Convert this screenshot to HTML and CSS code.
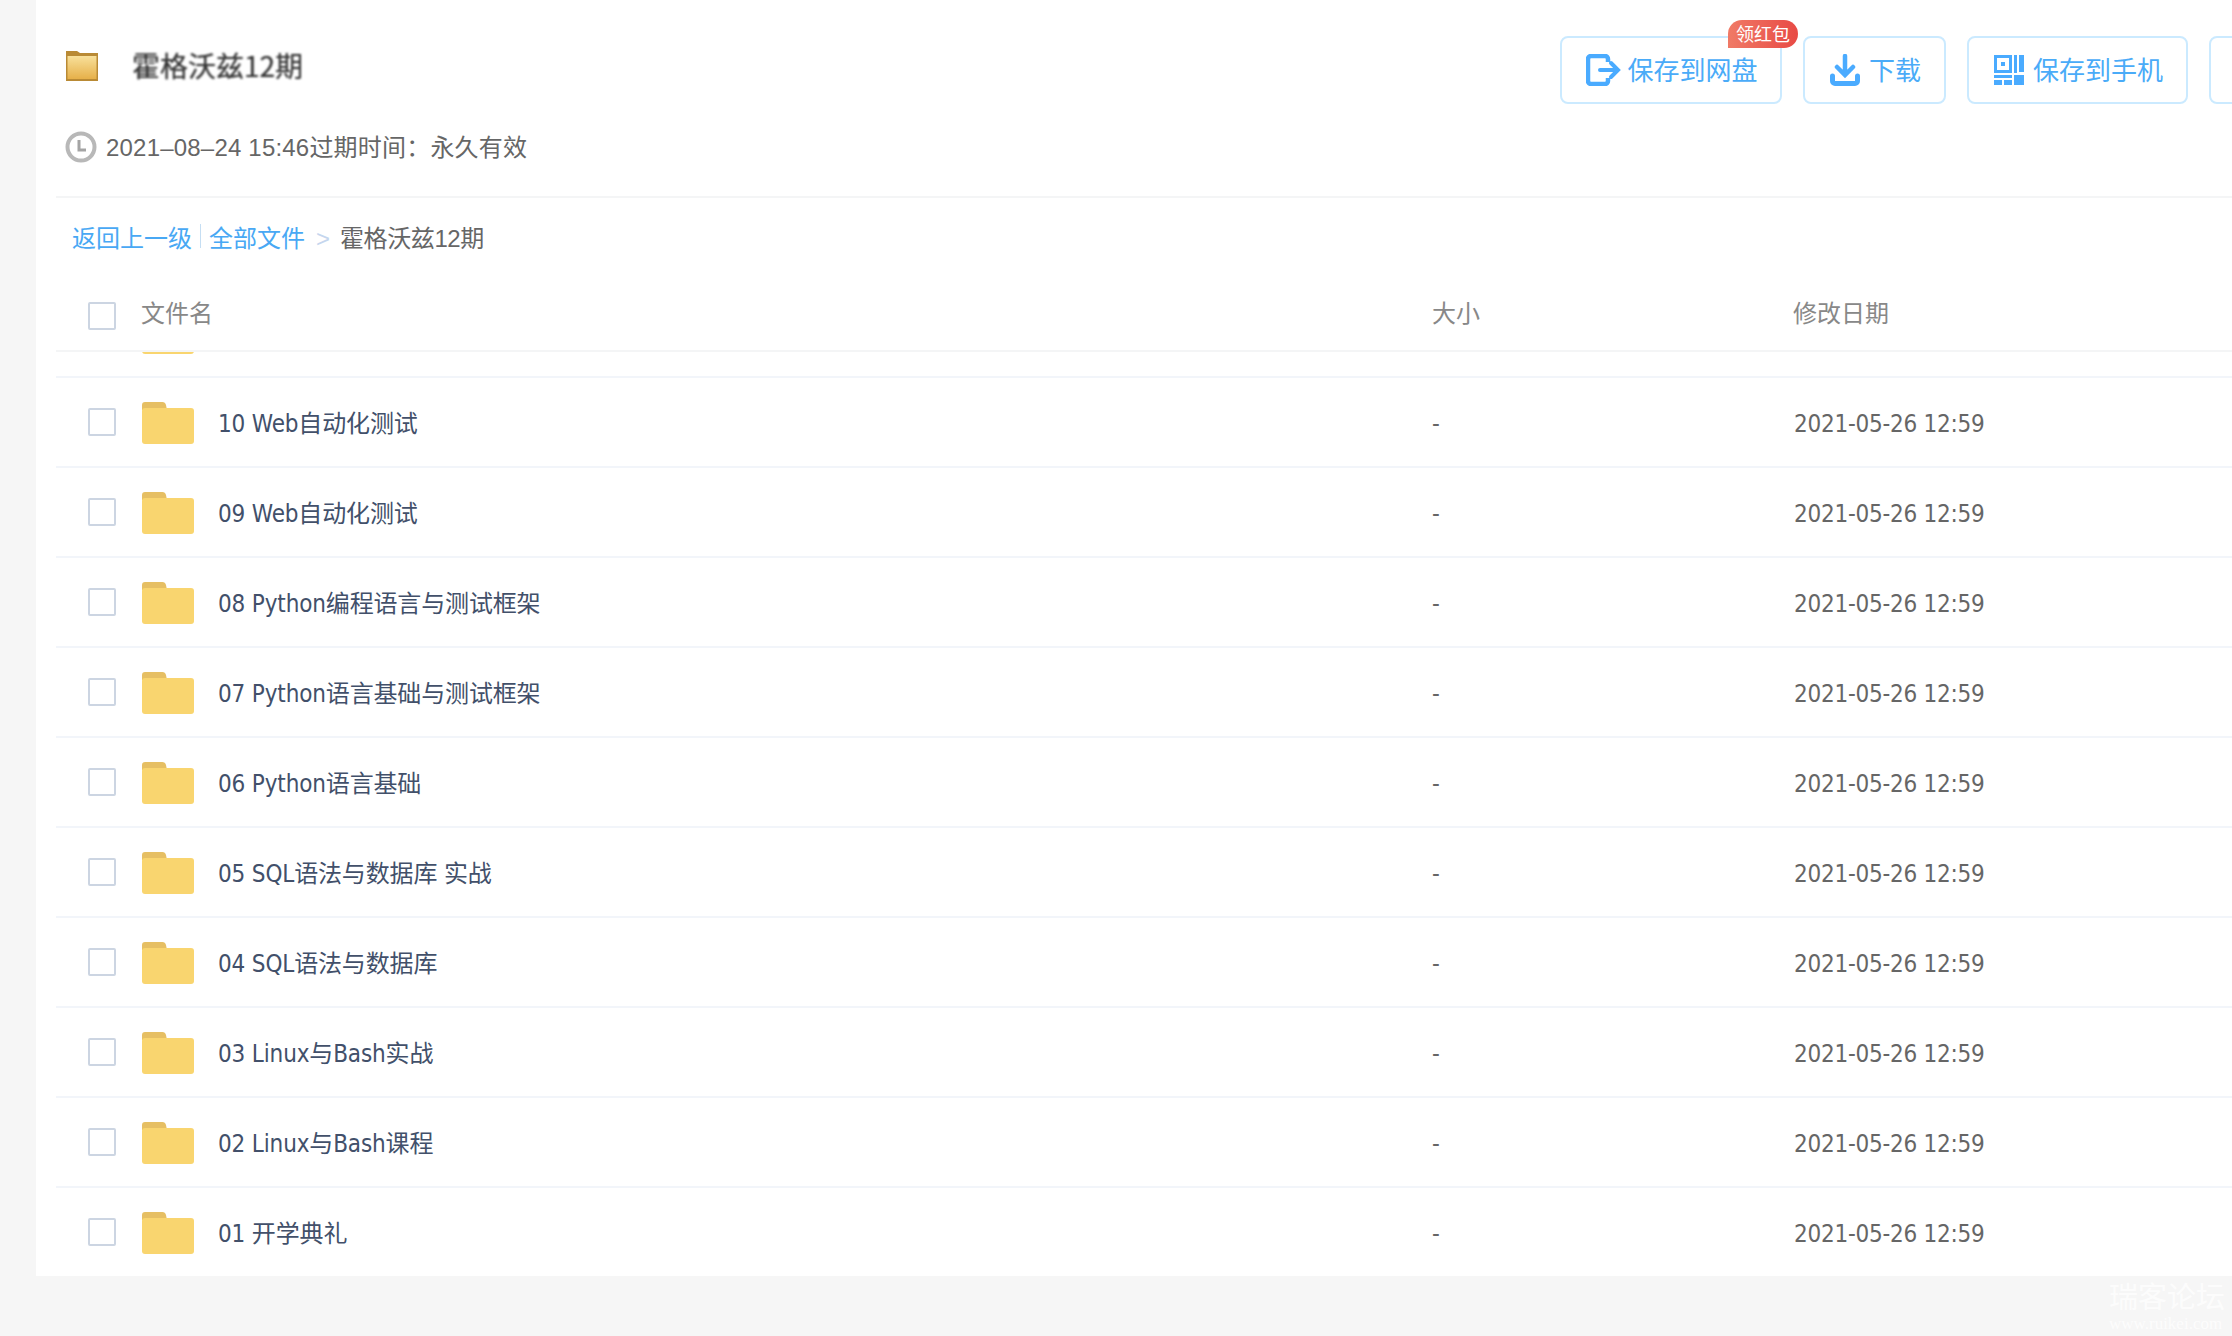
FILE: index.html
```html
<!DOCTYPE html>
<html lang="zh-CN">
<head>
<meta charset="utf-8">
<title>霍格沃兹12期</title>
<link rel="stylesheet" href="styles.css">
</head>
<body>
<svg class="defs" width="0" height="0" aria-hidden="true">
  <symbol id="folder" viewBox="0 0 52 42">
    <path fill="#e6bf63" d="M0 8V3a3 3 0 0 1 3-3h17a4 4 0 0 1 4 3l1 5z"/>
    <path fill="#f9d56f" d="M0 9a3 3 0 0 1 3-3h46a3 3 0 0 1 3 3v30a3 3 0 0 1-3 3H3a3 3 0 0 1-3-3z"/>
  </symbol>
</svg>
<main class="panel">
  <header class="head">
    <div class="info">
      <div class="title-line">
        <svg class="title-icon" viewBox="0 0 32 30">
          <defs><linearGradient id="tf" x1="0" y1="0" x2="0" y2="1"><stop offset="0" stop-color="#f8e09a"/><stop offset="1" stop-color="#e6b04a"/></linearGradient></defs>
          <path fill="#b98a35" d="M0 0h11l3 2h18v28H0z"/>
          <path fill="url(#tf)" d="M1.500 5h29v23h-29z"/>
        </svg>
        <h1 class="title">霍格沃兹12期</h1>
      </div>
      <div class="meta">
        <svg class="clock" viewBox="0 0 32 32"><circle cx="16" cy="16" r="13.500" fill="none" stroke="#b8b8b8" stroke-width="4"/><path d="M14 9v10h7" fill="none" stroke="#a4a4a4" stroke-width="3"/></svg>
        <span>2021–08–24 15:46过期时间：永久有效</span>
      </div>
    </div>
    <div class="actions">
      <a class="btn btn-save"><svg class="icon-save" viewBox="0 0 35 32"><path fill="none" stroke="#4aabff" stroke-width="4.500" d="M22 8V5a3 3 0 0 0-3-3H5a3 3 0 0 0-3 3v22a3 3 0 0 0 3 3h14a3 3 0 0 0 3-3v-3"/><path fill="none" stroke="#4aabff" stroke-width="4" stroke-linecap="round" d="M14 16h17M25 9l7 7-7 7"/></svg><span class="btn-label">保存到网盘</span><span class="badge">领红包</span></a>
      <a class="btn btn-down"><svg class="icon-down" viewBox="0 0 30 32"><path fill="none" stroke="#4aabff" stroke-width="4.500" stroke-linecap="round" d="M15 2v17M7 13l8 8 8-8"/><path fill="none" stroke="#4aabff" stroke-width="5" stroke-linecap="round" stroke-linejoin="round" d="M2.500 22v5a2.500 2.500 0 0 0 2.500 2.500h20a2.500 2.500 0 0 0 2.500-2.500v-5"/></svg><span class="btn-label">下载</span></a>
      <a class="btn btn-phone"><svg class="icon-qr" viewBox="0 0 30 30"><path fill="#4aabff" fill-rule="evenodd" d="M0 0h18v18H0zM3 3v12h12V3zM7 7h4v4H7z"/><path fill="#4aabff" d="M20 0h3v18h-3zM25 0h5v17h-5zM0 20h18v3H0zM0 25h8v5H0zM10 25h8v5h-8zM20 20h10v10H20z"/></svg><span class="btn-label">保存到手机</span></a>
      <a class="btn btn-more"></a>
    </div>
  </header>
  <nav class="crumbs"><a>返回上一级</a><i class="sep"></i><a>全部文件</a><span class="gt">&gt;</span><span class="current">霍格沃兹12期</span></nav>
  <div class="list-head">
    <div class="cell-check"><span class="box"></span></div>
    <div class="cell-name">文件名</div>
    <div class="cell-size">大小</div>
    <div class="cell-date">修改日期</div>
  </div>
  <div class="peek"><svg class="peek-folder"><use href="#folder"/></svg></div>
  <div class="row"><div class="cell-check"><span class="box"></span></div><svg class="folder"><use href="#folder"/></svg><div class="cell-text">10 Web自动化测试</div><div class="cell-size">-</div><div class="cell-date">2021-05-26 12:59</div></div>
  <div class="row"><div class="cell-check"><span class="box"></span></div><svg class="folder"><use href="#folder"/></svg><div class="cell-text">09 Web自动化测试</div><div class="cell-size">-</div><div class="cell-date">2021-05-26 12:59</div></div>
  <div class="row"><div class="cell-check"><span class="box"></span></div><svg class="folder"><use href="#folder"/></svg><div class="cell-text">08 Python编程语言与测试框架</div><div class="cell-size">-</div><div class="cell-date">2021-05-26 12:59</div></div>
  <div class="row"><div class="cell-check"><span class="box"></span></div><svg class="folder"><use href="#folder"/></svg><div class="cell-text">07 Python语言基础与测试框架</div><div class="cell-size">-</div><div class="cell-date">2021-05-26 12:59</div></div>
  <div class="row"><div class="cell-check"><span class="box"></span></div><svg class="folder"><use href="#folder"/></svg><div class="cell-text">06 Python语言基础</div><div class="cell-size">-</div><div class="cell-date">2021-05-26 12:59</div></div>
  <div class="row"><div class="cell-check"><span class="box"></span></div><svg class="folder"><use href="#folder"/></svg><div class="cell-text">05 SQL语法与数据库 实战</div><div class="cell-size">-</div><div class="cell-date">2021-05-26 12:59</div></div>
  <div class="row"><div class="cell-check"><span class="box"></span></div><svg class="folder"><use href="#folder"/></svg><div class="cell-text">04 SQL语法与数据库</div><div class="cell-size">-</div><div class="cell-date">2021-05-26 12:59</div></div>
  <div class="row"><div class="cell-check"><span class="box"></span></div><svg class="folder"><use href="#folder"/></svg><div class="cell-text">03 Linux与Bash实战</div><div class="cell-size">-</div><div class="cell-date">2021-05-26 12:59</div></div>
  <div class="row"><div class="cell-check"><span class="box"></span></div><svg class="folder"><use href="#folder"/></svg><div class="cell-text">02 Linux与Bash课程</div><div class="cell-size">-</div><div class="cell-date">2021-05-26 12:59</div></div>
  <div class="row"><div class="cell-check"><span class="box"></span></div><svg class="folder"><use href="#folder"/></svg><div class="cell-text">01 开学典礼</div><div class="cell-size">-</div><div class="cell-date">2021-05-26 12:59</div></div>
</main>
<div class="watermark"><div class="wm-cn">瑞客论坛</div><div class="wm-en">www.ruikei.com</div></div>
</body>
</html>
```
FILE: styles.css
```css
* { box-sizing: border-box; }
html, body { margin: 0; height: 1336px; overflow: hidden; }
body {
  background: #f6f6f6;
  font-family: "Liberation Sans", "Noto Sans CJK SC", sans-serif;
  font-size: 24px;
  color: #666;
  position: relative;
}
.defs { display: block; height: 0; }
.panel {
  margin-left: 36px;
  width: 2196px;
  height: 1276px;
  padding-left: 20px;
  background: #fff;
  overflow: hidden;
}
.head {
  display: flex;
  justify-content: space-between;
  height: 198px;
  border-bottom: 2px solid #f4f5f6;
}
.info { padding: 47px 0 0 10px; }
.title-line { display: flex; align-items: center; height: 36px; }
.title-icon { width: 32px; height: 30px; margin: 2px 34px 0 0; filter: blur(.5px); }
.title {
  margin: 0;
  font-family: "Noto Sans CJK SC", sans-serif;
  font-size: 28px;
  font-weight: 400;
  color: #333;
  filter: blur(.8px);
  text-shadow: 0 0 1px rgba(0,0,0,.5);
}
.meta { display: flex; align-items: center; margin-top: 44px; height: 36px; color: #666; letter-spacing: .2px; }
.meta span { margin-left: 1px; }
.clock { width: 32px; height: 32px; margin: 4px 8px 0 -1px; filter: blur(.5px); }
.actions { display: flex; gap: 21px; padding-top: 36px; width: 672px; flex: none; }
.btn {
  position: relative;
  display: flex;
  align-items: center;
  justify-content: center;
  flex: none;
  height: 68px;
  padding-left: 2px;
  border: 2px solid #cbeaff;
  border-radius: 8px;
  font-family: "Noto Sans CJK SC", sans-serif;
  font-size: 26px;
  color: #4aabf8;
}
.btn-label { padding-bottom: 3px; }
.icon-save { width: 35px; height: 32px; margin-right: 6px; }
.icon-down { width: 30px; height: 32px; margin-right: 9px; }
.icon-qr { width: 30px; height: 30px; margin-right: 9px; }
.btn-save { width: 222px; }
.btn-down { width: 143px; }
.btn-phone { width: 221px; }
.btn-more { width: 60px; }
.badge {
  position: absolute;
  top: -18px;
  right: -18px;
  width: 70px;
  height: 28px;
  border-radius: 14px 14px 14px 0;
  background: linear-gradient(90deg, #f07a66, #e84a45);
  color: #fff;
  font-size: 18px;
  line-height: 27px;
  text-align: center;
}
.crumbs { display: flex; align-items: center; height: 76px; padding-left: 16px; color: #666; }
.crumbs a { color: #48a8f4; }
.sep { width: 1px; height: 24px; margin: 0 8px; background: #c5def3; }
.gt { margin: 0 10px 0 11px; padding-top: 5px; color: #c5d6ee; font-size: 24px; }
.current { letter-spacing: -.4px; }
.list-head {
  display: flex;
  align-items: center;
  height: 78px;
  border-bottom: 2px solid #f4f5f6;
  color: #888;
}
.cell-check { display: flex; width: 86px; padding-left: 32px; flex: none; }
.list-head .cell-check { width: 85px; padding-top: 8px; }
.box {
  display: block;
  width: 28px;
  height: 28px;
  border: 2px solid #ccd5e2;
  border-radius: 2px;
  background: #fff;
}
.cell-name { width: 1291px; flex: none; padding-bottom: 2px; }
.cell-size { width: 361px; flex: none; }
.list-head .cell-size, .list-head .cell-date { padding-bottom: 2px; }
.peek { height: 26px; padding-left: 86px; border-bottom: 2px solid #f2f5fa; overflow: hidden; }
.peek-folder { display: block; width: 52px; height: 42px; margin-top: -40px; }
.row {
  display: flex;
  align-items: center;
  height: 90px;
  border-bottom: 2px solid #f2f5fa;
  color: #666;
}
.row .cell-size, .row .cell-date, .cell-text {
  font-family: "DejaVu Sans Condensed", "DejaVu Sans", "Noto Sans CJK SC", sans-serif;
  font-stretch: condensed;
}
.row .cell-size, .row .cell-date { padding-top: 3px; }
.row .cell-date { letter-spacing: -.25px; margin-left: 1px; }
.folder { width: 52px; height: 42px; flex: none; margin: 2px 24px 0 0; }
.cell-text { width: 1214px; flex: none; padding-bottom: 2px; letter-spacing: -.15px; color: #42506a; }
.watermark {
  position: absolute;
  left: 2109px;
  top: 1284px;
  width: 120px;
  color: rgba(255,255,255,.75);
  line-height: 1;
}
.wm-cn { font-size: 29px; }
.wm-en { font-family: "Liberation Serif", serif; font-size: 17px; margin-top: 2px; white-space: nowrap; }
```
